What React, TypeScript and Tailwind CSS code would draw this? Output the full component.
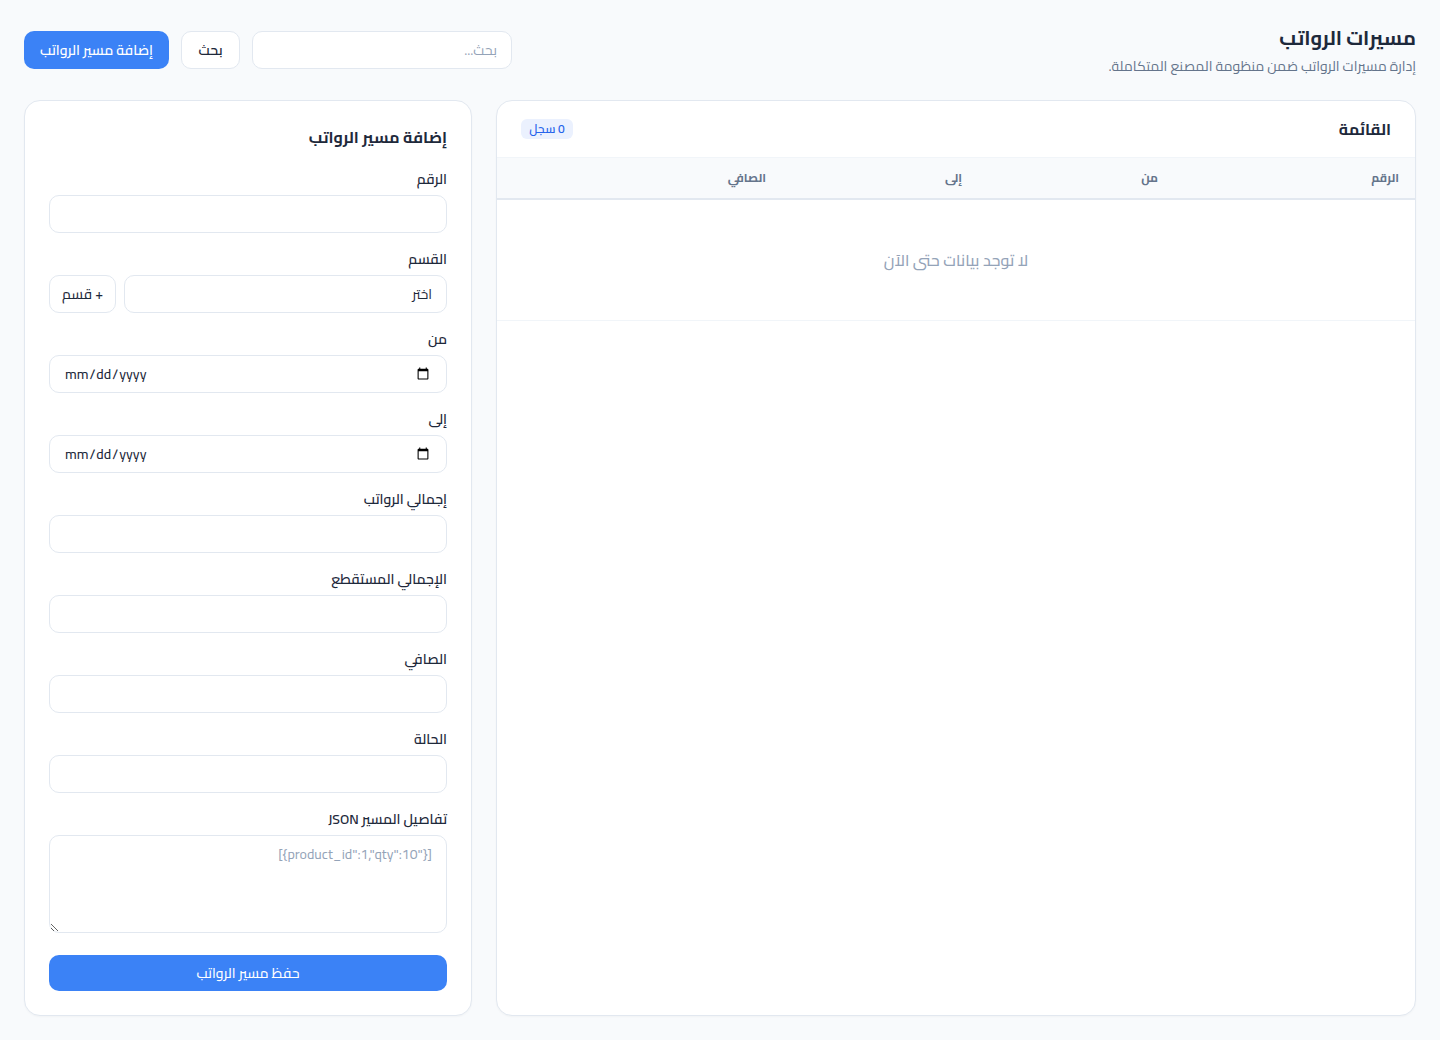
const inputClass =
  'w-full h-[38px] rounded-[10px] border border-[#e2e8f0] bg-white px-[14px] text-[14px] text-[#1e293b] outline-none placeholder:text-[#94a3b8]';

const fields = ['إجمالي الرواتب', 'الإجمالي المستقطع', 'الصافي', 'الحالة'];
const columns = ['الرقم', 'من', 'إلى', 'الصافي', ''];
const colWidths = ['w-[241px]', 'w-[196px]', 'w-[196px]', 'w-[196px]', ''];

function Label({ text }: { text: string }) {
  return <label className="mb-[6px] block h-[22px] text-[14px] leading-[24px] font-semibold text-[#1e293b]">{text}</label>;
}

function Field({ text, children }: { text: string; children: React.ReactNode }) {
  return (
    <div className="mb-[14px]">
      <Label text={text} />
      {children}
    </div>
  );
}

export default function App() {
  return (
    <div dir="rtl" className="min-h-[1040px] bg-[#f8fafc] px-6 pt-6 pb-6 font-['Cairo','Noto_Sans','DejaVu_Sans',sans-serif] text-[#1e293b]">
      {/* Header */}
      <div className="mb-[24px] flex h-[52px] items-start justify-between">
        <div>
          <h1 className="text-[20px] leading-[28px] font-bold text-[#1e293b]">مسيرات الرواتب</h1>
          <p className="mt-[3px] text-[14px] leading-[22px] text-[#64748b]">إدارة مسيرات الرواتب ضمن منظومة المصنع المتكاملة.</p>
        </div>
        <div className="mt-[7px] flex items-center gap-3">
          <input placeholder="بحث..." className="h-[38px] w-[260px] rounded-[10px] border border-[#e2e8f0] bg-white px-[14px] text-[14px] outline-none placeholder:text-[#94a3b8]" />
          <button className="h-[38px] w-[59px] rounded-[10px] border border-[#e2e8f0] bg-white text-[14px] font-semibold text-[#1e293b]">بحث</button>
          <button className="h-[38px] w-[145px] rounded-[10px] bg-[#3b82f6] text-[14px] font-semibold text-white">إضافة مسير الرواتب</button>
        </div>
      </div>

      <div className="flex h-[916px] gap-6">
        {/* List */}
        <div className="flex-1 overflow-hidden rounded-2xl border border-[#e2e8f0] bg-white shadow-[0_1px_2px_rgba(15,23,42,0.03)]">
          <div className="flex h-[57px] items-center justify-between border-b border-[#f1f5f9] px-6">
            <h2 className="text-[16px] font-bold text-[#1e293b]">القائمة</h2>
            <span className="w-[52px] rounded-md bg-[#ebf1fe] py-[2px] text-center text-[12px] leading-[16px] font-semibold text-[#2563eb]">0 سجل</span>
          </div>
          <table className="w-full border-collapse text-right">
            <thead>
              <tr className="h-[41px] border-b-2 border-[#e2e8f0] bg-[#f8fafc]">
                {columns.map((col, i) => (
                  <th key={i} className={`px-4 text-[12px] font-bold text-[#64748b] ${colWidths[i]}`}>{col}</th>
                ))}
              </tr>
            </thead>
            <tbody>
              <tr className="h-[121px] border-b border-[#f1f5f9]">
                <td colSpan={5} className="text-center text-[16px] font-medium text-[#94a3b8]">لا توجد بيانات حتى الآن</td>
              </tr>
            </tbody>
          </table>
        </div>

        {/* Form */}
        <div className="w-[448px] rounded-2xl border border-[#e2e8f0] bg-white px-6 pt-6 shadow-[0_1px_2px_rgba(15,23,42,0.03)]">
          <h3 className="mb-[18px] text-[16px] leading-[24px] font-bold text-[#1e293b]">إضافة مسير الرواتب</h3>
          <Field text="الرقم"><input className={inputClass} /></Field>
          <Field text="القسم">
            <div className="flex gap-2">
              <select className={`${inputClass} flex-1 appearance-none`}>
                <option>اختر</option>
              </select>
              <button className="h-[38px] w-[67px] shrink-0 rounded-[10px] border border-[#e2e8f0] bg-white text-[14px] font-medium">+ قسم</button>
            </div>
          </Field>
          <Field text="من"><input type="date" dir="ltr" className={`${inputClass} font-medium`} /></Field>
          <Field text="إلى"><input type="date" dir="ltr" className={`${inputClass} font-medium`} /></Field>
          {fields.map((f) => (
            <Field key={f} text={f}><input className={inputClass} /></Field>
          ))}
          <Field text="تفاصيل المسير JSON">
            <textarea
              placeholder='[{"product_id":1,"qty":10}]'
              className="block h-[98px] w-full rounded-[10px] border border-[#e2e8f0] bg-white px-[14px] py-[8px] text-[14px] outline-none placeholder:text-[#94a3b8]"
            />
          </Field>
          <button className="mt-2 h-[36px] w-full rounded-[10px] bg-[#3b82f6] text-[14px] font-medium text-white">حفظ مسير الرواتب</button>
        </div>
      </div>
    </div>
  );
}
